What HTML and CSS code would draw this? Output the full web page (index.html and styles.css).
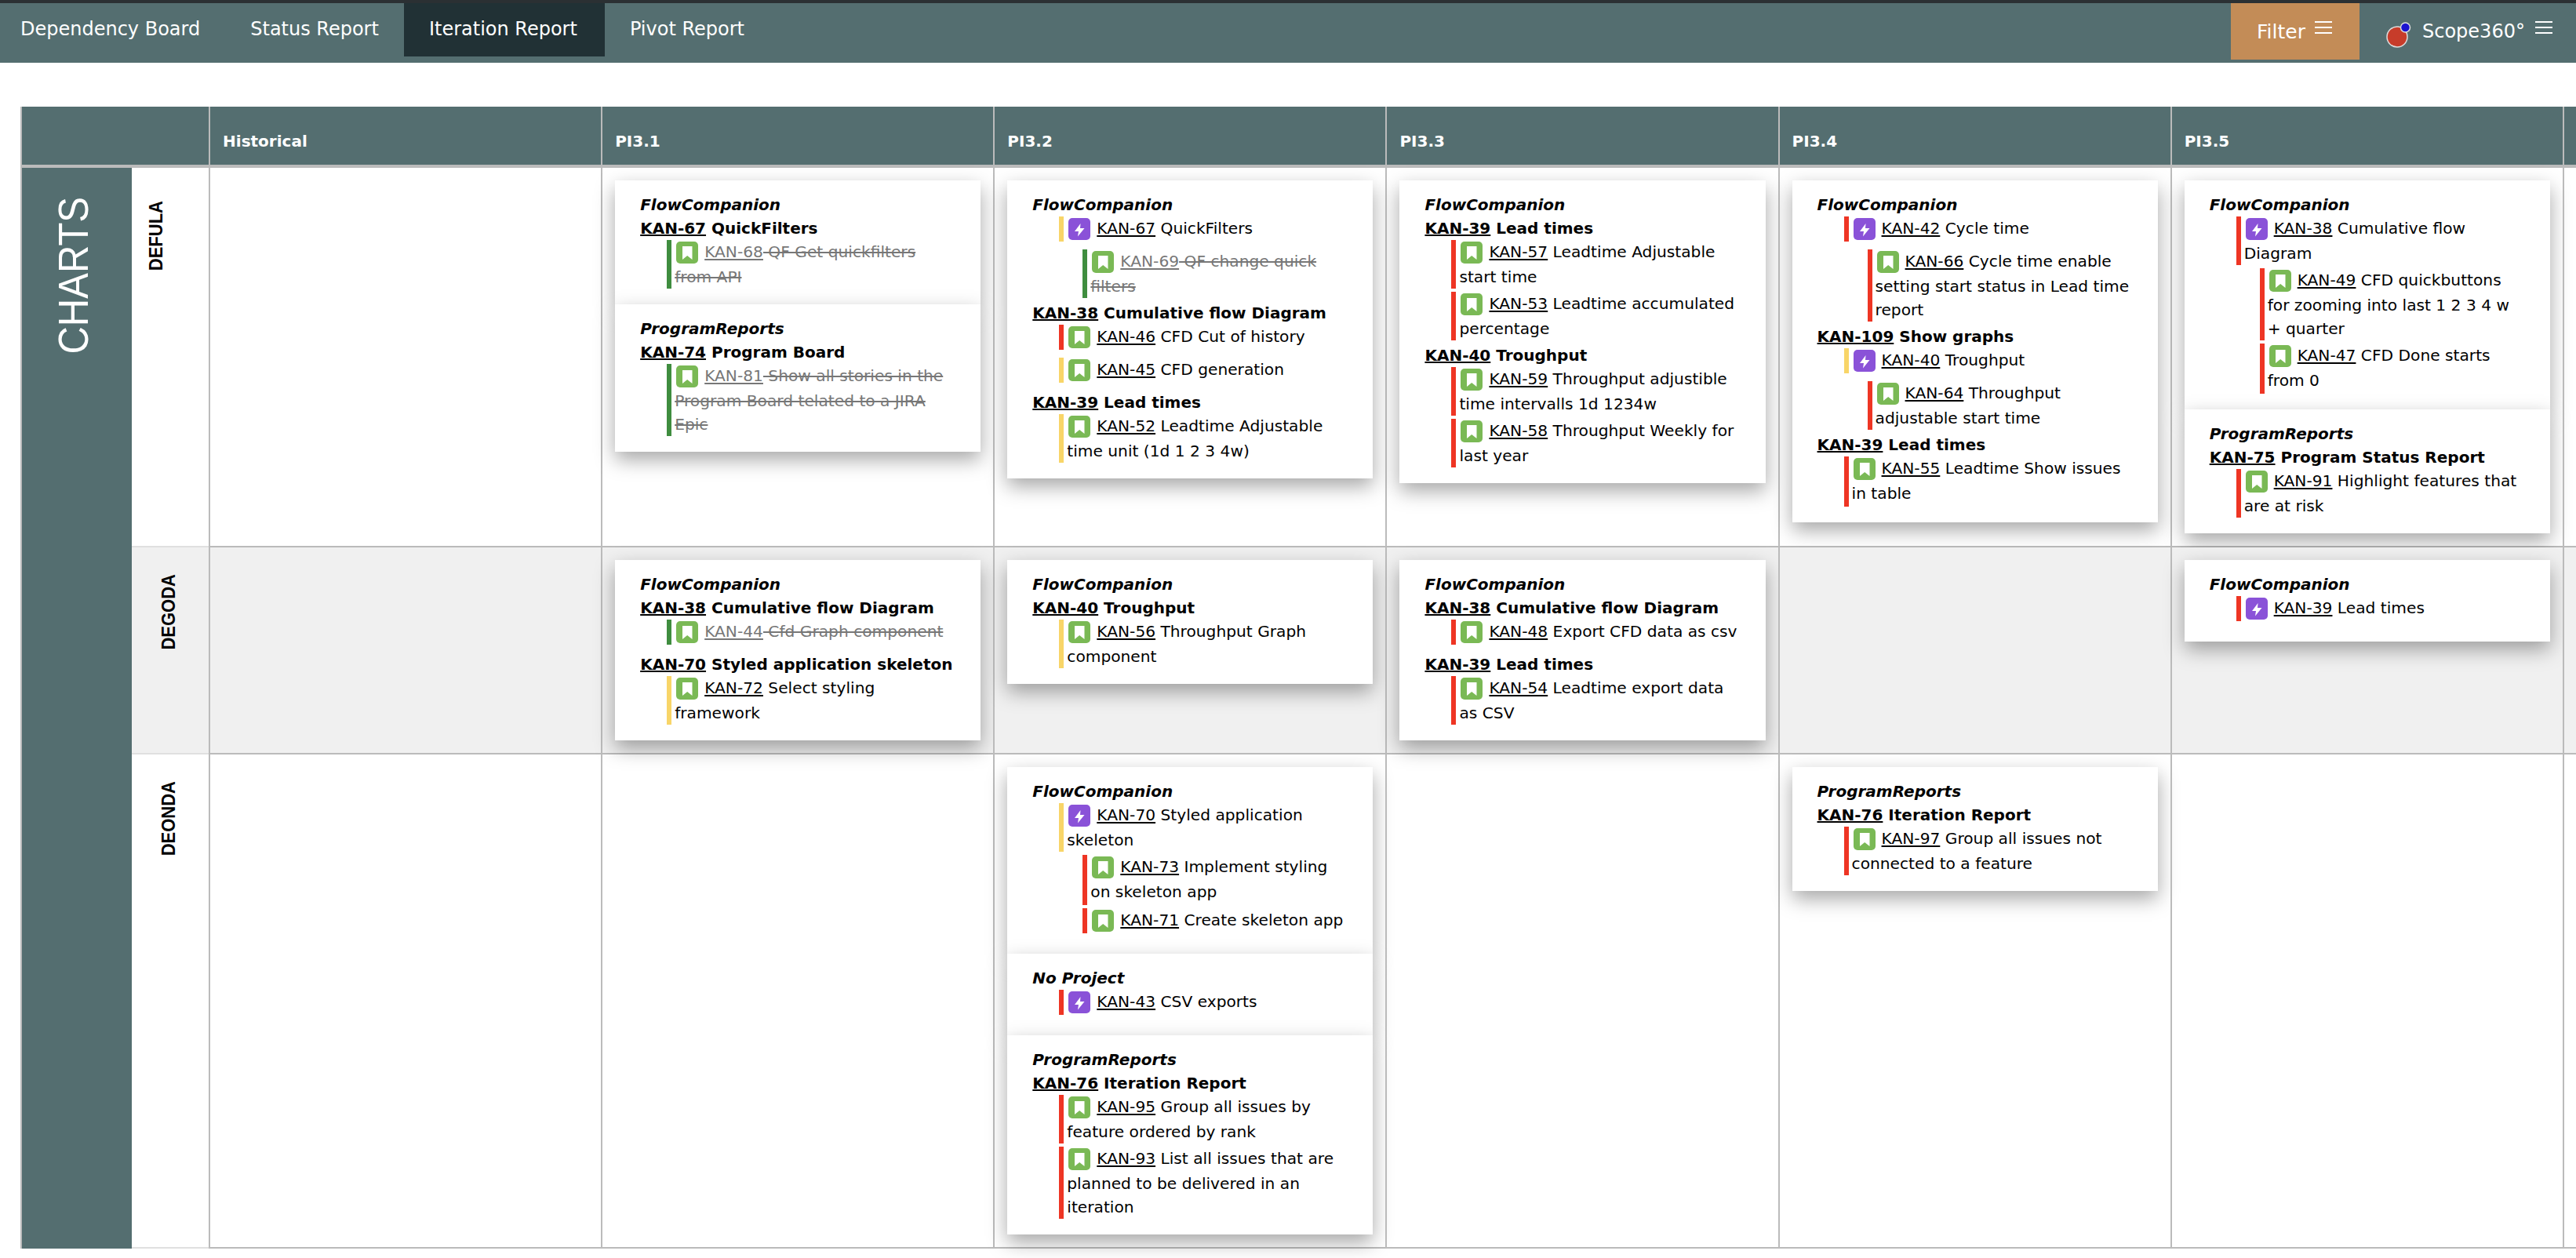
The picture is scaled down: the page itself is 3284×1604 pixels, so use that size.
FILE: index.html
```html
<!DOCTYPE html>
<html lang="en">
  <head>
    <meta charset="UTF-8" />
    <meta name="viewport" content="width=device-width, initial-scale=1.0" />
    <title>Iteration Report</title>
    <link rel="stylesheet" href="styles.css">
  </head>
  <body>
    <svg class="sprites" width="0" height="0">
      <symbol id="story" viewBox="0 0 28 28">
        <rect width="28" height="28" rx="5" fill="#7ab955" />
        <path d="M8 6h12.5v17L14.2 18 8 23z" fill="#fff" />
      </symbol>
      <symbol id="epic" viewBox="0 0 28 28">
        <rect width="28" height="28" rx="5" fill="#8a52d8" />
        <path d="M15.5 7 8 17h5l-1 6.5L20.5 13H15z" fill="#fff" />
      </symbol>
    </svg>

    <nav class="topbar">
      <a class="tab tab-first">Dependency Board</a>
      <a class="tab">Status Report</a>
      <a class="tab tab-active">Iteration Report</a>
      <a class="tab">Pivot Report</a>
      <div class="topbar-right">
        <button class="filter-button">Filter <span class="burger"><i></i><i></i><i></i></span></button>
        <div class="brand">
          <svg class="brand-logo" width="32" height="34" viewBox="0 0 32 34">
            <circle cx="14" cy="20" r="13" fill="#c73c2a" stroke="#ddd" stroke-width="1.5" />
            <circle cx="24.5" cy="8" r="6" fill="#1c14d0" stroke="#ddd" stroke-width="1.5" />
          </svg>
          <span>Scope360°</span>
          <span class="burger"><i></i><i></i><i></i></span>
        </div>
      </div>
    </nav>

    <table class="board">
      <colgroup>
        <col class="col-group" /><col class="col-label" />
        <col class="col-pi" /><col class="col-pi" /><col class="col-pi" /><col class="col-pi" /><col class="col-pi" /><col class="col-pi" /><col class="col-pi" />
      </colgroup>
      <thead>
        <tr>
          <th colspan="2" class="corner"></th>
          <th>Historical</th>
          <th>PI3.1</th>
          <th>PI3.2</th>
          <th>PI3.3</th>
          <th>PI3.4</th>
          <th>PI3.5</th>
          <th></th>
        </tr>
      </thead>
      <tbody>
        <tr>
          <th rowspan="3" class="group-cell"><div class="group-name">CHARTS</div></th>
          <td class="label-cell"><div class="row-name row-name-first">DEFULA</div></td>
          <td></td>
          <td>
            <div class="card">
              <div class="project">FlowCompanion</div>
              <div class="feature"><a>KAN-67</a> QuickFilters</div>
              <div class="issue nested green done"><svg class="icon"><use href="#story" /></svg><a>KAN-68</a><s> QF Get quickfilters from API</s></div>
            </div>
            <div class="card">
              <div class="project">ProgramReports</div>
              <div class="feature"><a>KAN-74</a> Program Board</div>
              <div class="issue nested green done"><svg class="icon"><use href="#story" /></svg><a>KAN-81</a><s> Show all stories in the Program Board telated to a JIRA Epic</s></div>
            </div>
          </td>
          <td>
            <div class="card">
              <div class="project">FlowCompanion</div>
              <div class="issue yellow one-line"><svg class="icon"><use href="#epic" /></svg><a>KAN-67</a> QuickFilters</div>
              <div class="issue child green done"><svg class="icon"><use href="#story" /></svg><a>KAN-69</a><s> QF change quick filters</s></div>
              <div class="feature"><a>KAN-38</a> Cumulative flow Diagram</div>
              <div class="issue red one-line"><svg class="icon"><use href="#story" /></svg><a>KAN-46</a> CFD Cut of history</div>
              <div class="issue yellow one-line"><svg class="icon"><use href="#story" /></svg><a>KAN-45</a> CFD generation</div>
              <div class="feature"><a>KAN-39</a> Lead times</div>
              <div class="issue yellow"><svg class="icon"><use href="#story" /></svg><a>KAN-52</a> Leadtime Adjustable time unit (1d 1 2 3 4w)</div>
            </div>
          </td>
          <td>
            <div class="card">
              <div class="project">FlowCompanion</div>
              <div class="feature"><a>KAN-39</a> Lead times</div>
              <div class="issue red"><svg class="icon"><use href="#story" /></svg><a>KAN-57</a> Leadtime Adjustable start time</div>
              <div class="issue red"><svg class="icon"><use href="#story" /></svg><a>KAN-53</a> Leadtime accumulated percentage</div>
              <div class="feature"><a>KAN-40</a> Troughput</div>
              <div class="issue red"><svg class="icon"><use href="#story" /></svg><a>KAN-59</a> Throughput adjustible time intervalls 1d 1234w</div>
              <div class="issue red"><svg class="icon"><use href="#story" /></svg><a>KAN-58</a> Throughput Weekly for last year</div>
            </div>
          </td>
          <td>
            <div class="card">
              <div class="project">FlowCompanion</div>
              <div class="issue red one-line"><svg class="icon"><use href="#epic" /></svg><a>KAN-42</a> Cycle time</div>
              <div class="issue child red"><svg class="icon"><use href="#story" /></svg><a>KAN-66</a> Cycle time enable setting start status in Lead time report</div>
              <div class="feature"><a>KAN-109</a> Show graphs</div>
              <div class="issue yellow one-line"><svg class="icon"><use href="#epic" /></svg><a>KAN-40</a> Troughput</div>
              <div class="issue child red"><svg class="icon"><use href="#story" /></svg><a>KAN-64</a> Throughput adjustable start time</div>
              <div class="feature"><a>KAN-39</a> Lead times</div>
              <div class="issue red tall"><svg class="icon"><use href="#story" /></svg><a>KAN-55</a> Leadtime Show issues in table</div>
            </div>
          </td>
          <td>
            <div class="card">
              <div class="project">FlowCompanion</div>
              <div class="issue red"><svg class="icon"><use href="#epic" /></svg><a>KAN-38</a> Cumulative flow Diagram</div>
              <div class="issue child red"><svg class="icon"><use href="#story" /></svg><a>KAN-49</a> CFD quickbuttons for zooming into last 1 2 3 4 w + quarter</div>
              <div class="issue child red tall"><svg class="icon"><use href="#story" /></svg><a>KAN-47</a> CFD Done starts from 0</div>
            </div>
            <div class="card">
              <div class="project">ProgramReports</div>
              <div class="feature"><a>KAN-75</a> Program Status Report</div>
              <div class="issue red"><svg class="icon"><use href="#story" /></svg><a>KAN-91</a> Highlight features that are at risk</div>
            </div>
          </td>
          <td></td>
        </tr>
        <tr class="row-alt">
          <td class="label-cell"><div class="row-name">DEGODA</div></td>
          <td></td>
          <td>
            <div class="card">
              <div class="project">FlowCompanion</div>
              <div class="feature"><a>KAN-38</a> Cumulative flow Diagram</div>
              <div class="issue nested green done one-line"><svg class="icon"><use href="#story" /></svg><a>KAN-44</a><s> Cfd Graph component</s></div>
              <div class="feature"><a>KAN-70</a> Styled application skeleton</div>
              <div class="issue yellow"><svg class="icon"><use href="#story" /></svg><a>KAN-72</a> Select styling framework</div>
            </div>
          </td>
          <td>
            <div class="card">
              <div class="project">FlowCompanion</div>
              <div class="feature"><a>KAN-40</a> Troughput</div>
              <div class="issue yellow"><svg class="icon"><use href="#story" /></svg><a>KAN-56</a> Throughput Graph component</div>
            </div>
          </td>
          <td>
            <div class="card">
              <div class="project">FlowCompanion</div>
              <div class="feature"><a>KAN-38</a> Cumulative flow Diagram</div>
              <div class="issue red one-line"><svg class="icon"><use href="#story" /></svg><a>KAN-48</a> Export CFD data as csv</div>
              <div class="feature"><a>KAN-39</a> Lead times</div>
              <div class="issue red"><svg class="icon"><use href="#story" /></svg><a>KAN-54</a> Leadtime export data as CSV</div>
            </div>
          </td>
          <td></td>
          <td>
            <div class="card">
              <div class="project">FlowCompanion</div>
              <div class="issue red one-line"><svg class="icon"><use href="#epic" /></svg><a>KAN-39</a> Lead times</div>
            </div>
          </td>
          <td></td>
        </tr>
        <tr>
          <td class="label-cell"><div class="row-name">DEONDA</div></td>
          <td></td>
          <td></td>
          <td>
            <div class="card">
              <div class="project">FlowCompanion</div>
              <div class="issue yellow"><svg class="icon"><use href="#epic" /></svg><a>KAN-70</a> Styled application skeleton</div>
              <div class="issue child red tall"><svg class="icon"><use href="#story" /></svg><a>KAN-73</a> Implement styling on skeleton app</div>
              <div class="issue child red one-line"><svg class="icon"><use href="#story" /></svg><a>KAN-71</a> Create skeleton app</div>
            </div>
            <div class="card">
              <div class="project">No Project</div>
              <div class="issue red one-line"><svg class="icon"><use href="#epic" /></svg><a>KAN-43</a> CSV exports</div>
            </div>
            <div class="card">
              <div class="project">ProgramReports</div>
              <div class="feature"><a>KAN-76</a> Iteration Report</div>
              <div class="issue red"><svg class="icon"><use href="#story" /></svg><a>KAN-95</a> Group all issues by feature ordered by rank</div>
              <div class="issue red"><svg class="icon"><use href="#story" /></svg><a>KAN-93</a> List all issues that are planned to be delivered in an iteration</div>
            </div>
          </td>
          <td></td>
          <td>
            <div class="card">
              <div class="project">ProgramReports</div>
              <div class="feature"><a>KAN-76</a> Iteration Report</div>
              <div class="issue red"><svg class="icon"><use href="#story" /></svg><a>KAN-97</a> Group all issues not connected to a feature</div>
            </div>
          </td>
          <td></td>
          <td></td>
        </tr>
      </tbody>
    </table>
  </body>
</html>
```

FILE: styles.css
```css
html,
body {
  height: 100%;
  margin: 0;
  overflow: hidden;
}
body {
  font-family: "DejaVu Sans", Verdana, sans-serif;
  font-size: 20px;
  color: #000;
  background-color: #fff;
}
.sprites {
  position: absolute;
}

/* top bar */
.topbar {
  display: flex;
  align-items: flex-start;
  height: 76px;
  background-color: #546e70;
  border-top: 4px solid #2b3033;
  color: #fff;
}
.tab {
  display: block;
  height: 68px;
  padding: 0 32px;
  font-size: 24px;
  line-height: 67px;
  white-space: nowrap;
}
.tab-first {
  padding-left: 26px;
}
.tab-active {
  padding-right: 35px;
  background-color: #213135;
}
.topbar-right {
  display: flex;
  margin-left: auto;
}
.filter-button {
  display: flex;
  align-items: center;
  gap: 12px;
  width: 164px;
  height: 72px;
  padding: 0 0 0 33px;
  border: 0;
  background-color: #c38c57;
  color: #fff;
  font-family: inherit;
  font-size: 25px;
}
.brand {
  display: flex;
  align-items: center;
  height: 72px;
  padding-left: 34px;
  width: 276px;
  box-sizing: border-box;
  font-size: 24px;
}
.brand-logo {
  margin: 8px 14px 0 0;
}
.brand .burger {
  margin-left: 13px;
}
.burger {
  display: flex;
  flex-direction: column;
  gap: 5px;
  width: 22px;
  margin-top: -10px;
}
.burger i {
  display: block;
  height: 2px;
  background-color: #fff;
}

/* board */
.board {
  table-layout: fixed;
  width: 3741px;
  margin: 56px 0 0 26px;
  border-collapse: separate;
  border-spacing: 0;
  border-left: 2px solid #bbb;
}
.col-group {
  width: 140px;
}
.col-label {
  width: 98px;
}
.col-pi {
  width: 500px;
}
.board thead th {
  height: 78px;
  padding: 14px 16px 0;
  box-sizing: border-box;
  background-color: #546e70;
  border-left: 2px solid #bbb;
  border-bottom: 4px solid #bbb;
  color: #fff;
  font-size: 20px;
  text-align: left;
  vertical-align: middle;
}
.board thead th.corner {
  border-left: 0;
}
.board tbody td {
  padding: 16px;
  border-left: 2px solid #bbb;
  border-bottom: 2px solid #bbb;
  vertical-align: top;
}
.row-alt td {
  background-color: #f0f0f0;
}
.board tbody .label-cell {
  padding: 0;
  border-left: 0;
  border-bottom-color: #e0e0e0;
}
.group-cell {
  background-color: #546e70;
  vertical-align: top;
  padding: 37px 0 0;
}
.group-name,
.row-name {
  writing-mode: vertical-rl;
  font-family: "Liberation Sans", Arial, sans-serif;
  white-space: nowrap;
}
.group-name {
  margin: 0 auto;
  color: #fff;
  font-size: 49px;
  font-weight: 400;
  line-height: 50px;
  transform: translateX(-4px) rotate(180deg) scaleX(1.08);
}
.row-name {
  margin: 34px 0 0 34px;
  font-size: 22px;
  font-weight: 700;
  line-height: 26px;
  transform: rotate(180deg) scaleX(1.12);
}
.row-name-first {
  margin: 42px 0 0 18px;
}

/* cards */
.card {
  padding: 16px 32px;
  background-color: #fff;
  box-shadow: 0 10px 24px rgba(0, 0, 0, 0.35);
}
.project {
  font-style: italic;
  font-weight: 700;
  line-height: 30px;
}
.feature {
  font-weight: 700;
  line-height: 30px;
}
.feature a,
.issue a {
  text-decoration: underline;
}
.issue {
  margin: 0 0 4px 34px;
  padding-left: 4px;
  border-left: 6px solid #ee3524;
  font-size: 20.2px;
  line-height: 30px;
}
.issue.one-line {
  margin-bottom: 10px;
}
.issue.tall {
  padding-bottom: 2px;
}
.issue.child {
  margin-left: 64px;
}
.issue.nested {
  margin-left: 34px;
}
.issue.red {
  border-left-color: #ee3524;
}
.issue.yellow {
  border-left-color: #f8d568;
}
.issue.green {
  border-left-color: #3f8d3f;
}
.issue.done,
.issue.done a {
  color: #777;
}
.issue s {
  text-decoration: line-through;
}
.icon {
  width: 28px;
  height: 28px;
  margin: 0 8px 2px 2px;
  vertical-align: -10px;
}
```
